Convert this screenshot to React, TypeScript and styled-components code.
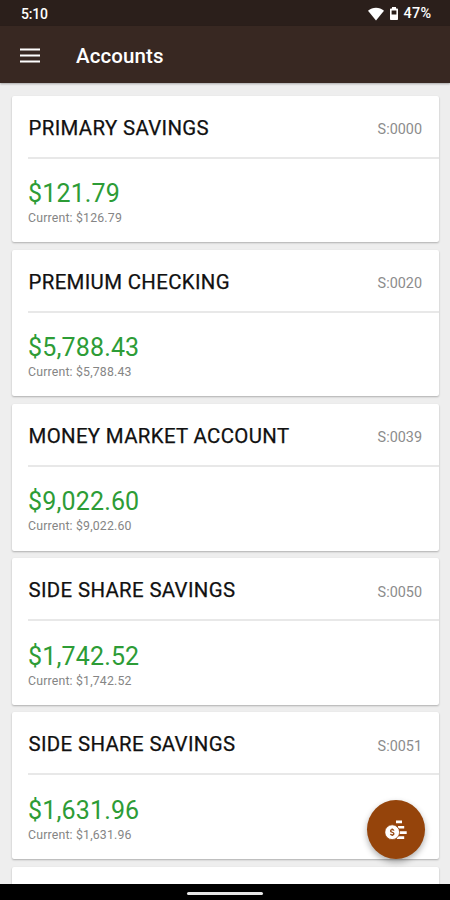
import React from "react";
import styled, { createGlobalStyle } from "styled-components";

const GlobalStyle = createGlobalStyle`
  * { box-sizing: border-box; }
  html, body { margin: 0; padding: 0; overflow: hidden; }
  body { font-family: Roboto, "Liberation Sans", sans-serif; background: #eeeeee; }
`;

const Screen = styled.div`
  position: relative;
  display: flex;
  flex-direction: column;
  width: 450px;
  height: 900px;
  overflow: hidden;
  background: #eeeeee;
`;

const StatusBar = styled.header`
  display: flex;
  flex: none;
  align-items: center;
  justify-content: space-between;
  height: 26px;
  padding: 1px 19px 0 21px;
  background: #2b1f1b;
  color: #ffffff;
`;

const Clock = styled.span`
  font-size: 14px;
  font-weight: 500;
  line-height: 20px;
  letter-spacing: -0.2px;
`;

const StatusIcons = styled.div`
  display: flex;
  align-items: center;
`;

const WifiIcon = styled.svg`
  width: 16px;
  height: 14px;
  margin-right: 5px;
`;

const BatteryIcon = styled.svg`
  width: 10px;
  height: 15px;
  margin-right: 4px;
`;

const BatteryLevel = styled.span`
  font-size: 14.4px;
  font-weight: 500;
  line-height: 20px;
  letter-spacing: 0.3px;
  margin-right: -0.3px;
`;

const AppBar = styled.div`
  z-index: 1;
  display: flex;
  flex: none;
  align-items: center;
  height: 57px;
  padding: 1px 20px 0;
  background: #382822;
  box-shadow: 0 1px 2px rgba(0, 0, 0, 0.3);
`;

const MenuButton = styled.button`
  display: flex;
  padding: 0;
  border: 0;
  background: none;
`;

const AppTitle = styled.h1`
  margin: 1px 0 0 36px;
  color: #ffffff;
  font-size: 20.5px;
  font-weight: 500;
  line-height: 28px;
  letter-spacing: 0.1px;
`;

const AccountList = styled.main`
  display: flex;
  flex: 1;
  flex-direction: column;
  gap: 7.6px;
  min-height: 0;
  padding: 12.6px 11px 0 12px;
  overflow: hidden;
`;

const Card = styled.article`
  flex: none;
  height: 146.6px;
  border-radius: 2px;
  background: #ffffff;
  box-shadow: 0 1px 2px rgba(0, 0, 0, 0.27);
`;

const CardHeader = styled.div`
  display: flex;
  align-items: center;
  justify-content: space-between;
  height: 63px;
  margin-left: 16px;
  padding: 3px 17px 0 0.5px;
  border-bottom: 2px solid #e8e8e8;
`;

const AccountName = styled.h2`
  margin: 0;
  color: #111111;
  font-size: 20.4px;
  font-weight: 400;
  line-height: 26px;
  letter-spacing: 0.35px;
  -webkit-text-stroke: 0.25px #111111;
`;

const AccountCode = styled.span`
  margin-top: 5px;
  color: #8c8c8c;
  font-size: 14.4px;
  line-height: 20px;
`;

const Balances = styled.div`
  display: flex;
  flex-direction: column;
  padding: 20.5px 16px 0;
`;

const Available = styled.span`
  color: #2d9c36;
  font-size: 25px;
  line-height: 30px;
  letter-spacing: 0.16px;
`;

const Current = styled.span`
  color: #858585;
  font-size: 12.3px;
  line-height: 18px;
  letter-spacing: 0.18px;
`;

const NavigationBar = styled.footer`
  z-index: 1;
  display: flex;
  flex: none;
  align-items: center;
  justify-content: center;
  height: 16px;
  padding-top: 2px;
  background: #000000;
`;

const HomeHandle = styled.div`
  width: 76px;
  height: 3px;
  border-radius: 2px;
  background: #e6e6e6;
`;

const ActionButton = styled.button`
  position: absolute;
  right: 25px;
  bottom: 41px;
  z-index: 2;
  display: flex;
  align-items: center;
  justify-content: center;
  width: 58px;
  height: 59px;
  padding: 0;
  border: 0;
  border-radius: 50%;
  background: #95440b;
  box-shadow: 0 3px 6px rgba(0, 0, 0, 0.32);
`;

const accounts = [
  { name: "PRIMARY SAVINGS", code: "S:0000", available: "$121.79", current: "$126.79" },
  { name: "PREMIUM CHECKING", code: "S:0020", available: "$5,788.43", current: "$5,788.43" },
  { name: "MONEY MARKET ACCOUNT", code: "S:0039", available: "$9,022.60", current: "$9,022.60" },
  { name: "SIDE SHARE SAVINGS", code: "S:0050", available: "$1,742.52", current: "$1,742.52" },
  { name: "SIDE SHARE SAVINGS", code: "S:0051", available: "$1,631.96", current: "$1,631.96" },
];

export default function App() {
  return (
    <>
      <GlobalStyle />
      <Screen>
        <StatusBar>
          <Clock>5:10</Clock>
          <StatusIcons>
            <WifiIcon viewBox="0 0 16 14" aria-hidden="true">
              <path d="M0 3.7C4.4-.3 11.6-.3 16 3.7L8 13.5Z" fill="#fff" />
            </WifiIcon>
            <BatteryIcon viewBox="0 0 10 15" aria-hidden="true">
              <path d="M3 1h4v1.5h1.2c.5 0 .8.4.8.8v10c0 .5-.4.8-.8.8H1.8c-.5 0-.8-.4-.8-.8v-10c0-.5.4-.8.8-.8H3Z" fill="#fff" />
              <path d="M2.6 4.5h4.8v4H2.6Z" fill="#2b1f1b" />
            </BatteryIcon>
            <BatteryLevel>47%</BatteryLevel>
          </StatusIcons>
        </StatusBar>
        <AppBar>
          <MenuButton aria-label="Menu">
            <svg width="20" height="15" viewBox="0 0 20 15">
              <path d="M0 1.5h20M0 7.5h20M0 13.5h20" stroke="#fff" strokeWidth="2.1" />
            </svg>
          </MenuButton>
          <AppTitle>Accounts</AppTitle>
        </AppBar>
        <AccountList>
          {accounts.map((account) => (
            <Card key={account.code}>
              <CardHeader>
                <AccountName>{account.name}</AccountName>
                <AccountCode>{account.code}</AccountCode>
              </CardHeader>
              <Balances>
                <Available>{account.available}</Available>
                <Current>Current: {account.current}</Current>
              </Balances>
            </Card>
          ))}
          <Card />
        </AccountList>
        <NavigationBar>
          <HomeHandle />
        </NavigationBar>
        <ActionButton aria-label="Move money">
          <svg width="22" height="20" viewBox="0 0 22 20">
            <path d="M11 .5h6v2.7h-6ZM13 5.9h6.2v2.7H13ZM14 11.2h7.7v2.7H14ZM12 16.3h7.2V19H12Z" fill="#fff" />
            <circle cx="7.2" cy="12.2" r="7.4" fill="#fff" stroke="#95440b" strokeWidth="0.8" />
            <path d="M8.9 10.6C8.4 9.2 5.6 9.4 5.6 10.9c0 1.7 3.3 1 3.3 2.8 0 1.6-3 1.6-3.4.1M7.2 8.6v1.3M7.2 14.7v1.3" fill="none" stroke="#95440b" strokeWidth="1.3" />
          </svg>
        </ActionButton>
      </Screen>
    </>
  );
}
